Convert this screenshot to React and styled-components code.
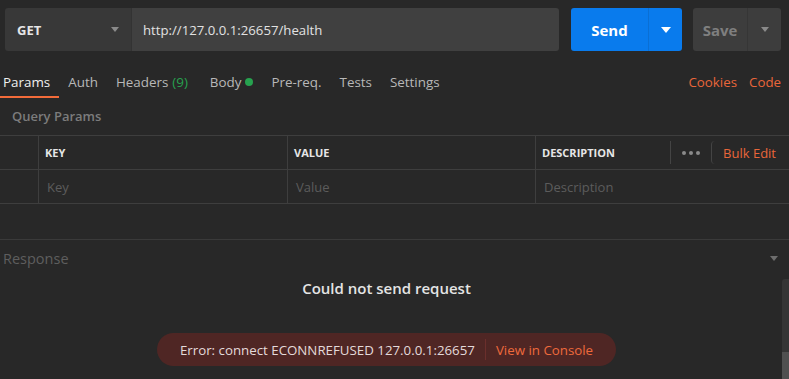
import React from 'react';
import styled, { createGlobalStyle } from 'styled-components';

const GlobalStyle = createGlobalStyle`
  html, body {
    margin: 0;
    padding: 0;
    background: #282828;
  }
  body {
    font-family: 'Open Sans', 'DejaVu Sans', sans-serif;
    color: #e0e0e0;
  }
`;

const Page = styled.div`
  width: 789px;
  height: 379px;
  overflow: hidden;
  background: #282828;
  display: flex;
  flex-direction: column;
`;

const TopBar = styled.div`
  display: flex;
  height: 43px;
  padding: 8px 8px 0 5px;
`;

const UrlGroup = styled.div`
  display: flex;
  flex: 1;
  border-radius: 3px;
  overflow: hidden;
  margin-right: 12px;
`;

const MethodSelect = styled.div`
  width: 127px;
  display: flex;
  align-items: center;
  justify-content: space-between;
  padding: 0 12px 0 12px;
  box-sizing: border-box;
  background: #383838;
  border-right: 1px solid #333;
  font-size: 13px;
  font-weight: 700;
  color: #e6e6e6;
`;

const UrlInput = styled.div`
  flex: 1;
  display: flex;
  align-items: center;
  padding-left: 11px;
  background: #404040;
  font-size: 13.2px;
  color: #e2e2e2;
`;

const Caret = styled.span`
  width: 0;
  height: 0;
  border-left: ${(p) => p.size || 5}px solid transparent;
  border-right: ${(p) => p.size || 5}px solid transparent;
  border-top: ${(p) => (p.size || 5) + 1}px solid ${(p) => p.color || '#8a8a8a'};
`;

const SplitButton = styled.div`
  display: flex;
  width: ${(p) => p.width}px;
  margin-left: ${(p) => p.gap || 0}px;
  border-radius: 3px;
  overflow: hidden;
  background: ${(p) => p.bg};
`;

const MainAction = styled.div`
  flex: 1;
  display: flex;
  align-items: center;
  justify-content: center;
  font-size: 15px;
  font-weight: 700;
  color: ${(p) => p.color};
  border-right: 1px solid ${(p) => p.divider};
`;

const DropAction = styled.div`
  width: 33px;
  display: flex;
  align-items: center;
  justify-content: center;
`;

const TabsRow = styled.div`
  display: flex;
  align-items: flex-end;
  margin-top: 17px;
  padding-right: 8px;
`;

const Tabs = styled.div`
  display: flex;
  margin-left: -6px;
  flex: 1;
`;

const Tab = styled.div`
  height: 28px;
  line-height: 28px;
  padding: 0 ${(p) => p.padRight || 9}px 0 9px;
  font-size: 13.4px;
  color: ${(p) => (p.active ? '#f0f0f0' : '#b8b8b8')};
  border-bottom: 2px solid ${(p) => (p.active ? '#f26b3a' : 'transparent')};
  display: flex;
  align-items: center;
  gap: 4px;
`;

const Count = styled.span`
  color: #27a24f;
  margin-left: 4px;
`;

const Dot = styled.span`
  width: 8px;
  height: 8px;
  border-radius: 50%;
  background: #27a24f;
`;

const LinkTab = styled.div`
  height: 28px;
  line-height: 28px;
  margin-left: 12px;
  font-size: 13.3px;
  color: #e8663a;
  border-bottom: 2px solid transparent;
`;

const SectionTitle = styled.div`
  height: 37px;
  line-height: 37px;
  padding-left: 12px;
  font-size: 13px;
  font-weight: 600;
  color: #7c7c7c;
`;

const Table = styled.div`
  display: grid;
  grid-template-columns: 38px 249px 248px 1fr;
  border-top: 1px solid #3e3e3e;
`;

const Cell = styled.div`
  height: 33px;
  display: flex;
  align-items: center;
  padding-left: ${(p) => (p.header ? 6 : 8)}px;
  border-bottom: 1px solid #3e3e3e;
  border-left: ${(p) => (p.first ? 'none' : '1px solid #3e3e3e')};
  font-size: ${(p) => (p.header ? 11 : 13)}px;
  font-weight: ${(p) => (p.header ? 700 : 400)};
  color: ${(p) => (p.header ? '#e6e6e6' : '#5c5c5c')};
  text-transform: ${(p) => (p.header ? 'uppercase' : 'none')};
`;

const HeaderLabel = styled.span`
  flex: 1;
`;

const HeaderTools = styled.div`
  display: flex;
  align-items: center;
  height: 100%;
  text-transform: none;
`;

const ToolDivider = styled.span`
  width: 1px;
  height: 23px;
  background: #444;
`;

const More = styled.span`
  display: flex;
  gap: 3px;
  margin: 0 11px;
  span {
    width: 4px;
    height: 4px;
    border-radius: 50%;
    background: #8a8a8a;
  }
`;

const BulkEdit = styled.span`
  height: 23px;
  display: flex;
  align-items: center;
  padding: 0 13px 0 11px;
  border-left: 1px solid #444;
  border-radius: 4px 0 0 4px;
  font-size: 13px;
  font-weight: 400;
  color: #e8663a;
`;

const Spacer = styled.div`
  height: 35px;
  border-bottom: 1px solid #3a3a3a;
`;

const ResponseHeader = styled.div`
  height: 36px;
  display: flex;
  align-items: center;
  justify-content: space-between;
  padding: 0 11px 0 3px;
  font-size: 14.5px;
  color: #5e5e5e;
`;

const ResponseBody = styled.div`
  flex: 1;
  display: flex;
  min-height: 0;
`;

const ResponseContent = styled.div`
  flex: 1;
  display: flex;
  flex-direction: column;
  align-items: center;
  padding-right: 9px;
`;

const Message = styled.div`
  margin-top: 1px;
  font-size: 15px;
  font-weight: 600;
  color: #e4e4e4;
  line-height: 22px;
`;

const ErrorPill = styled.div`
  margin-top: 34px;
  height: 33px;
  display: flex;
  align-items: center;
  padding: 0 23px;
  border-radius: 17px;
  background: #4f2624;
  font-size: 13.3px;
`;

const ErrorText = styled.span`
  color: #e4dada;
`;

const PillDivider = styled.span`
  width: 1px;
  height: 21px;
  background: #6b2f2c;
  margin: 0 10px;
`;

const ConsoleLink = styled.span`
  color: #ee6a3c;
`;

const Scrollbar = styled.div`
  width: 7px;
  margin-top: 3px;
  display: flex;
  flex-direction: column;
  background: #353535;
  border-radius: 3px 0 0 0;
`;

const Thumb = styled.div`
  margin-top: 73px;
  flex: 1;
  background: #505050;
`;

const tabs = ['Params', 'Auth', 'Headers', 'Body', 'Pre-req.', 'Tests', 'Settings'];

export default function App() {
  return (
    <Page>
      <GlobalStyle />
      <TopBar>
        <UrlGroup>
          <MethodSelect>
            GET
            <Caret size={4} />
          </MethodSelect>
          <UrlInput>http://127.0.0.1:26657/health</UrlInput>
        </UrlGroup>
        <SplitButton width={111} bg="#097bed">
          <MainAction color="#ffffff" divider="#0a6fd4">Send</MainAction>
          <DropAction>
            <Caret size={5} color="#ffffff" />
          </DropAction>
        </SplitButton>
        <SplitButton width={88} gap={11} bg="#3d3d3d">
          <MainAction color="#7f7f7f" divider="#363636">Save</MainAction>
          <DropAction>
            <Caret size={4} color="#8a8a8a" />
          </DropAction>
        </SplitButton>
      </TopBar>

      <TabsRow>
        <Tabs>
          {tabs.map((t) => (
            <Tab key={t} active={t === 'Params'} padRight={t === 'Headers' ? 13 : 9}>
              {t === 'Headers' ? (
                <span>
                  Headers<Count>(9)</Count>
                </span>
              ) : (
                t
              )}
              {t === 'Body' && <Dot />}
            </Tab>
          ))}
        </Tabs>
        <LinkTab>Cookies</LinkTab>
        <LinkTab>Code</LinkTab>
      </TabsRow>

      <SectionTitle>Query Params</SectionTitle>

      <Table>
        <Cell header first />
        <Cell header>Key</Cell>
        <Cell header>Value</Cell>
        <Cell header>
          <HeaderLabel>Description</HeaderLabel>
          <HeaderTools>
            <ToolDivider />
            <More>
              <span />
              <span />
              <span />
            </More>
            <BulkEdit>Bulk Edit</BulkEdit>
          </HeaderTools>
        </Cell>
        <Cell first />
        <Cell>Key</Cell>
        <Cell>Value</Cell>
        <Cell>Description</Cell>
      </Table>

      <Spacer />

      <ResponseHeader>
        Response
        <Caret size={4} color="#6e6e6e" />
      </ResponseHeader>

      <ResponseBody>
        <ResponseContent>
          <Message>Could not send request</Message>
          <ErrorPill>
            <ErrorText>Error: connect ECONNREFUSED 127.0.0.1:26657</ErrorText>
            <PillDivider />
            <ConsoleLink>View in Console</ConsoleLink>
          </ErrorPill>
        </ResponseContent>
        <Scrollbar>
          <Thumb />
        </Scrollbar>
      </ResponseBody>
    </Page>
  );
}
